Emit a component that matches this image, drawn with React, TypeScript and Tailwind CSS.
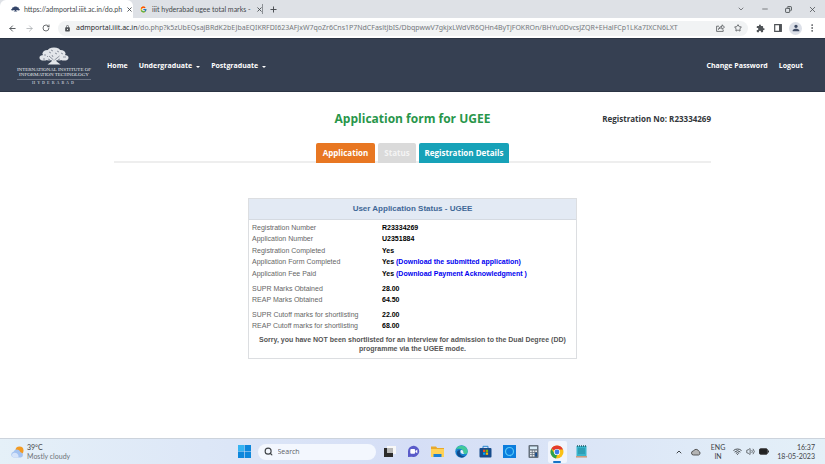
import type { ReactNode } from "react";
import {
  ArrowLeft,
  ArrowRight,
  ChevronDown,
  ChevronUp,
  Copy,
  EllipsisVertical,
  Minus,
  Plus,
  RotateCw,
  Search,
  Star,
  Volume2,
  Wifi,
  X,
} from "lucide-react";
import { MdExtension, MdLock, MdPerson } from "react-icons/md";
import { FcGoogle } from "react-icons/fc";

function Crown({ className }: { className: string }) {
  return (
    <svg viewBox="0 0 30 18" className={className} aria-hidden="true">
      <g fill="currentColor">
        <ellipse cx="15" cy="4" rx="6.5" ry="3.600" />
        <ellipse cx="8.5" cy="6.5" rx="5" ry="3.600" />
        <ellipse cx="21.5" cy="6.5" rx="5" ry="3.600" />
        <ellipse cx="4.800" cy="10.800" rx="4.300" ry="2.800" />
        <ellipse cx="25.200" cy="10.800" rx="4.300" ry="2.800" />
        <ellipse cx="10" cy="11" rx="4" ry="2.500" />
        <ellipse cx="20" cy="11" rx="4" ry="2.500" />
        <ellipse cx="15" cy="9" rx="7" ry="4" />
        <path d="M13 10h4l.6 4.500 4 3H8.500l4-3z" />
      </g>
      <g stroke="#364052" strokeWidth=".7" fill="none" opacity=".7">
        <path d="M14.500 13L10 9M15.500 13l5-4M10 5l2 1M18 4l2 1M5 8h2M22 6l2 1M12 3l2 1M4 12h2M24 10h3M16 6l2 1M9 12l2 .8M19 12.800l2-.8M13 8l1 2M8 9l1 1" />
      </g>
    </svg>
  );
}

function IconButton({ label, children, className = "" }: { label: string; children: ReactNode; className?: string }) {
  return (
    <button type="button" aria-label={label} className={`flex shrink-0 items-center justify-center ${className}`}>
      {children}
    </button>
  );
}

function TabStrip() {
  return (
    <div className="flex h-[18px] items-stretch bg-[#dee1e6] font-[Lato,sans-serif] text-[7px] text-[#45494d]">
      <div className="flex w-[133px] shrink-0 items-center gap-[4px] rounded-t-md bg-white pr-[5px] pl-[11px]">
        <Crown className="h-[6px] w-[9px] shrink-0 text-[#34466b]" />
        <span className="flex-1 whitespace-nowrap">https://admportal.iiit.ac.in/do.ph</span>
        <IconButton label="Close tab">
          <X size={7} strokeWidth={3} />
        </IconButton>
      </div>
      <div className="flex w-[129px] shrink-0 items-center gap-[5px] pr-[6px] pl-[7px]">
        <FcGoogle size={7} className="shrink-0" />
        <span className="flex-1 whitespace-nowrap">iiit hyderabad ugee total marks -</span>
        <IconButton label="Close tab">
          <X size={7} strokeWidth={3} />
        </IconButton>
      </div>
      <div className="my-[4px] w-px bg-[#8d9196]" />
      <IconButton label="New tab" className="w-[20px]">
        <Plus size={9} strokeWidth={2.5} />
      </IconButton>
      <div className="ml-auto flex items-center gap-[16px] pr-[8px]">
        <IconButton label="Search tabs">
          <ChevronDown size={8} />
        </IconButton>
        <IconButton label="Minimize">
          <Minus size={8} />
        </IconButton>
        <IconButton label="Restore">
          <Copy size={7} className="-scale-x-100" strokeWidth={3} />
        </IconButton>
        <IconButton label="Close window">
          <X size={9} />
        </IconButton>
      </div>
    </div>
  );
}

function Toolbar() {
  return (
    <div className="flex h-[20px] items-center bg-white pr-[8px] pl-[7px] text-[#4f5357]">
      <IconButton label="Back" className="w-[10px]">
        <ArrowLeft size={9} strokeWidth={2.5} />
      </IconButton>
      <IconButton label="Forward" className="ml-[7px] w-[10px] text-[#a6a9ad]">
        <ArrowRight size={9} />
      </IconButton>
      <IconButton label="Reload" className="ml-[7px] w-[10px]">
        <RotateCw size={8} strokeWidth={2.5} />
      </IconButton>
      <div className="ml-[7px] flex h-[15px] min-w-0 flex-1 items-center rounded-full bg-[#f1f3f4] px-[6px]">
        <MdLock size={7} className="shrink-0" />
        <div className="ml-[5px] flex-1 font-['Noto_Sans',sans-serif] text-[7px] whitespace-nowrap text-[#74787c]">
          <span className="text-[#2b2d30]">admportal.iiit.ac.in</span>
          /do.php?k5zUbEQsajBRdK2bEJbaEQIKRFDI623AFJxW7qoZr6Cns1P7NdCFasltJbIS/DbqpwwV7gkjxLWdVR6QHn4ByTjFOKROn/BHYu0DvcsJZQR+EHalFCp1LKa7IXCN6LXT
        </div>
        <IconButton label="Share" className="ml-[8px]">
          <svg viewBox="0 0 9 8" className="h-[8px] w-[9px]" fill="none" stroke="currentColor" strokeWidth=".8">
            <path d="M3 2.200H.6v5.200h6.600V5.600" />
            <path d="M2.500 5.500c.3-2 1.500-3 3.500-3V.8l2.500 2.300L6 5.300V3.800c-1.500 0-2.600.4-3.500 1.700z" />
          </svg>
        </IconButton>
        <IconButton label="Bookmark" className="ml-[9px]">
          <Star size={8} strokeWidth={2.5} />
        </IconButton>
      </div>
      <IconButton label="Extensions" className="ml-[8px]">
        <MdExtension size={9} />
      </IconButton>
      <IconButton label="Side panel" className="ml-[9px]">
        <svg viewBox="0 0 8 8" className="size-[8px]">
          <path d="M.7 .7h6.600v6.600H.7z" fill="none" stroke="currentColor" strokeWidth="1.200" />
          <path d="M5 1h2.500v6H5z" fill="currentColor" />
        </svg>
      </IconButton>
      <IconButton label="Profile" className="ml-[7px] size-[13px] rounded-full bg-[#dce0e8] text-[#3d4a63]">
        <MdPerson size={10} />
      </IconButton>
      <IconButton label="Menu" className="ml-[5px]">
        <EllipsisVertical size={10} />
      </IconButton>
    </div>
  );
}

function NavMenu({ children }: { children: ReactNode }) {
  return (
    <button type="button" className="flex items-center gap-[4px] font-bold">
      {children}
      <svg viewBox="0 0 4 2" className="h-[2px] w-[4px]" aria-hidden="true">
        <path d="M0 0h4L2 2z" fill="currentColor" />
      </svg>
    </button>
  );
}

function SiteHeader() {
  return (
    <header className="flex h-[54px] items-center border-y border-[#2b3444] bg-[#364052] pr-[22px] pl-[17px] text-[7px] font-bold text-white">
      <a href="#home" className="flex w-[74px] flex-col items-center pt-[2px] text-[#e3e6ea]">
        <Crown className="h-[18px] w-[30px]" />
        <span className="mt-[2px] font-['Liberation_Serif',serif] text-[5px] leading-[5px] font-normal whitespace-nowrap">
          INTERNATIONAL INSTITUTE OF
        </span>
        <span className="font-['Liberation_Serif',serif] text-[5px] leading-[5px] font-normal whitespace-nowrap">
          INFORMATION TECHNOLOGY
        </span>
        <span className="mt-[2px] w-full border-t border-[#697182] pt-px text-center font-['Liberation_Serif',serif] text-[4px] leading-[4px] tracking-[2px] text-[#b5bac4]">
          HYDERABAD
        </span>
      </a>
      <nav className="ml-[16px] flex flex-1 items-center gap-[11px] pt-[3px]">
        <a href="#home">Home</a>
        <NavMenu>Undergraduate</NavMenu>
        <NavMenu>Postgraduate</NavMenu>
        <a href="#password" className="ml-auto">Change Password</a>
        <a href="#logout">Logout</a>
      </nav>
    </header>
  );
}

type Row = { label: string; value: string; link?: string };

const groups: Row[][] = [
  [
    { label: "Registration Number", value: "R23334269" },
    { label: "Application Number", value: "U2351884" },
    { label: "Registration Completed", value: "Yes" },
    { label: "Application Form Completed", value: "Yes", link: "(Download the submitted application)" },
    { label: "Application Fee Paid", value: "Yes", link: "(Download Payment Acknowledgment )" },
  ],
  [
    { label: "SUPR Marks Obtained", value: "28.00" },
    { label: "REAP Marks Obtained", value: "64.50" },
  ],
  [
    { label: "SUPR Cutoff marks for shortlisting", value: "22.00" },
    { label: "REAP Cutoff marks for shortlisting", value: "68.00" },
  ],
];

function StatusCard() {
  return (
    <section className="mx-auto mt-[35px] w-full max-w-[329px] border border-[#dcdee1] font-['Liberation_Sans',Arial,sans-serif] text-[7px]">
      <h2 className="border-b border-[#d5dae1] bg-[#e3eaf4] text-center text-[8px] leading-[20px] font-bold text-[#3f6797]">
        User Application Status - UGEE
      </h2>
      <div className="flex flex-col gap-[3px] pt-px pl-[3px]">
        {groups.map((rows) => (
          <table key={rows[0].label} className="w-full table-fixed leading-[11px]">
            <tbody>
              {rows.map((row) => (
                <tr key={row.label} className="odd:h-[12px] even:h-[11px]">
                  <th scope="row" className="w-[130px] p-0 text-left font-normal text-[#666]">{row.label}</th>
                  <td className="p-0 font-bold text-black">
                    {row.value}
                    {row.link && (
                      <>
                        {" "}
                        <a href="#download" className="text-[#0000f0]">{row.link}</a>
                      </>
                    )}
                  </td>
                </tr>
              ))}
            </tbody>
          </table>
        ))}
      </div>
      <p className="px-[8px] pt-[4px] pb-[5px] text-center leading-[9px] font-bold text-[#555]">
        Sorry, you have NOT been shortlisted for an interview for admission to the Dual Degree (DD) programme via the UGEE mode.
      </p>
    </section>
  );
}

function Content() {
  return (
    <main className="mx-auto w-full max-w-[597px] flex-1">
      <div className="grid grid-cols-[1fr_auto_1fr] items-center pt-[18px]">
        <h1 className="col-start-2 text-[12px] leading-[18px] font-bold text-[#28964a]">Application form for UGEE</h1>
        <p className="text-right text-[8px] font-bold text-[#33373b]">Registration No: R23334269</p>
      </div>
      <div className="mt-[15px] flex justify-center gap-[3px] border-b-2 border-[#eeeeee] text-[8px] leading-[20px] font-bold text-white">
        <button type="button" className="-mb-[2px] w-[59px] rounded-t-xs bg-[#e87722]">Application</button>
        <button type="button" className="-mb-[2px] w-[38px] rounded-t-xs bg-[#dadada] text-[#f4f4f4]">Status</button>
        <button type="button" className="-mb-[2px] w-[90px] rounded-t-xs bg-[#17a2b8]">Registration Details</button>
      </div>
      <StatusCard />
    </main>
  );
}

function TaskIcons() {
  return (
    <>
      <IconButton label="Task view">
        <svg viewBox="0 0 13 13" className="size-[13px]">
          <path d="M4 1h9v8H4z" fill="#f7f7f7" />
          <path d="M1 3h9v9H1z" fill="#2b2b2b" />
          <path d="M4 3h6v5H4z" fill="#b9b9b9" />
        </svg>
      </IconButton>
      <IconButton label="Chat">
        <svg viewBox="0 0 13 13" className="size-[13px]">
          <path d="M1 6.500V12l4-.3A5.600 5.600 0 1 0 1 6.500z" fill="#5a5bc9" />
          <rect x="3.300" y="4" width="4.800" height="4.800" rx="1" fill="#fff" />
          <path d="M8.400 6l1.900-1.400v3.600L8.400 7z" fill="#fff" />
        </svg>
      </IconButton>
      <IconButton label="File Explorer">
        <svg viewBox="0 0 13 13" className="size-[13px]">
          <path d="M0 1.500h5l1.200 1.500H13v3H0z" fill="#e8a92c" />
          <path d="M0 4h13v8H0z" fill="#ffd257" />
          <path d="M2.500 9h8v3h-8z" fill="#1b7fd6" />
        </svg>
      </IconButton>
      <IconButton label="Edge">
        <svg viewBox="0 0 13 13" className="size-[13px]">
          <circle cx="6.500" cy="6.500" r="6.200" fill="#1680cf" />
          <path d="M.6 5A6.200 6.200 0 0 1 12.700 6.500c0 2-1.700 2.900-3.400 2.600-1.500-.3-1-1.500-1-2.500C8 4 3.500 2.500.6 5z" fill="#42c99b" />
          <path d="M5.500 5.500c-2 2.500 0 6 4.500 6-4 2.500-9-.5-8-4.500.4-1.500 2-2 3.500-1.500z" fill="#114a8b" />
          <path d="M5.700 5.200c1.300-.6 2.800.2 2.600 1.800 0 1 .3 1.700 1.300 2-2.500.6-5-1.300-3.900-3.800z" fill="#e6eefb" />
        </svg>
      </IconButton>
      <IconButton label="Microsoft Store">
        <svg viewBox="0 0 13 13" className="size-[13px]">
          <path d="M4 3.500V1.300h5v2.200" fill="none" stroke="#2887cf" />
          <rect x=".5" y="3" width="12" height="9.500" rx="1" fill="#164c8c" />
          <path d="M4 4.700h2.300V7H4z" fill="#f25022" />
          <path d="M6.800 4.700h2.300V7H6.800z" fill="#7fba00" />
          <path d="M4 7.500h2.300v2.300H4z" fill="#00a4ef" />
          <path d="M6.800 7.500h2.300v2.300H6.800z" fill="#ffb900" />
        </svg>
      </IconButton>
      <IconButton label="Alexa">
        <svg viewBox="0 0 13 13" className="size-[13px]">
          <path d="M0 0h13v13H0z" fill="#0b7ddd" />
          <circle cx="6.500" cy="6.500" r="4" fill="none" stroke="#57c8f7" strokeWidth="1.200" />
          <path d="M5.500 10.500l2-1 .5 2z" fill="#57c8f7" />
        </svg>
      </IconButton>
      <IconButton label="Calculator">
        <svg viewBox="0 0 13 13" className="size-[13px]">
          <rect x="1.500" width="10" height="13" rx="1" fill="#66717d" />
          <path d="M3 1.500h7v2.700H3z" fill="#d7ecf8" />
          <path d="M3 5.500h1.800v1.500H3zM5.600 5.500h1.800v1.500H5.600zM8.200 5.500H10v1.500H8.200zM3 7.800h1.800v1.500H3zM5.600 7.800h1.800v1.500H5.600zM3 10h1.800v1.500H3zM5.600 10h1.800v1.500H5.600z" fill="#e7ebef" />
          <path d="M8.200 7.800H10v3.700H8.200z" fill="#174e91" />
        </svg>
      </IconButton>
      <span className="-mx-[3px] flex h-[22px] w-[19px] flex-col items-center justify-end rounded-xs bg-[#f1f5fd]">
        <IconButton label="Chrome">
          <svg viewBox="0 0 14 14" className="size-[14px]">
            <circle cx="7" cy="7" r="6.500" fill="#fbc116" />
            <path d="M7 7L1.370 3.750A6.500 6.500 0 0 1 12.630 3.750L13 4.500H7z" fill="#e33b2e" />
            <path d="M1.370 3.750L4.400 8.500 7 10l-1 3.400A6.500 6.500 0 0 1 1.370 3.750z" fill="#2da04e" />
            <circle cx="7" cy="7" r="3.100" fill="#fff" />
            <circle cx="7" cy="7" r="2.400" fill="#3b7de9" />
          </svg>
        </IconButton>
        <span className="mt-[2px] h-[2px] w-[8px] rounded-full bg-[#1673c6]" />
      </span>
      <IconButton label="Notepad">
        <svg viewBox="0 0 13 13" className="size-[13px]">
          <path d="M1.500 1h10v10h-10z" fill="#39b5cc" />
          <path d="M2.500 0v2M4.500 0v2M6.500 0v2M8.500 0v2M10.500 0v2" stroke="#28606c" strokeWidth=".8" />
          <path d="M3 4h7M3 6h7M3 8h7" stroke="#207f96" strokeWidth=".8" />
          <path d="M1 11h11v1.600H1z" fill="#c99d82" />
        </svg>
      </IconButton>
    </>
  );
}

function Taskbar() {
  return (
    <footer className="grid h-[26px] grid-cols-[1fr_auto_1fr] items-center border-t border-[#ccd3dc] bg-linear-to-r from-[#e5f0f8] via-[#d5def6] to-[#e4f0f8] font-[Lato,sans-serif] text-[7px] leading-[9px] text-[#3f4347]">
      <div className="flex items-center gap-[3px] pl-[10px]">
        <svg viewBox="0 0 14 12" className="h-[12px] w-[14px]" aria-hidden="true">
          <circle cx="9.500" cy="4.500" r="4" fill="#f39a20" />
          <path d="M3.500 11.500a3 3 0 0 1 0-5.800 3.800 3.800 0 0 1 7 .5 2.700 2.700 0 0 1 .5 5.300z" fill="#a3c2f0" />
          <path d="M3.500 11.500a2.500 2.500 0 0 1 .8-4.800 4 4 0 0 1 4.200 4.800z" fill="#d6e4fa" />
        </svg>
        <div>
          <p>39°C</p>
          <p className="text-[#6d7277]">Mostly cloudy</p>
        </div>
      </div>
      <div className="flex items-center gap-[11px]">
        <IconButton label="Start">
          <svg viewBox="0 0 13 13" className="size-[13px]">
            <path d="M0 0h6.200v6.200H0zM6.800 0H13v6.200H6.800zM0 6.800h6.200V13H0zM6.800 6.800H13V13H6.800z" fill="#0d87dc" />
            <path d="M0 0h6.200v6.200H0z" fill="#35b4f2" />
          </svg>
        </IconButton>
        <label className="-mx-[4px] flex h-[16px] w-[118px] items-center gap-[5px] rounded-full bg-[#f3f7fe] pl-[6px]">
          <Search size={9} strokeWidth={3} className="shrink-0" aria-hidden="true" />
          <input
            type="text"
            aria-label="Search"
            placeholder="Search"
            className="w-full min-w-0 bg-transparent font-['Open_Sans',sans-serif] text-[7px] outline-none placeholder:text-[#5c6066]"
          />
        </label>
        <TaskIcons />
      </div>
      <div className="flex items-center justify-end pr-[10px]">
        <ChevronUp size={8} strokeWidth={3} />
        <svg viewBox="0 0 10 8" className="ml-[8px] h-[8px] w-[10px]" aria-hidden="true">
          <path d="M2.500 7a2 2 0 0 1 0-4 2.800 2.800 0 0 1 5.200.2A2 2 0 0 1 7.600 7z" fill="#b4b4b4" stroke="#4a4a4a" strokeWidth=".9" />
        </svg>
        <p className="ml-[10px] text-center">
          ENG
          <br />
          IN
        </p>
        <Wifi size={9} strokeWidth={2.5} className="ml-[8px]" />
        <Volume2 size={9} className="ml-[4px]" />
        <svg viewBox="0 0 10 7" className="ml-[4px] h-[7px] w-[10px]" aria-hidden="true">
          <rect x=".5" y=".8" width="7.800" height="5.400" rx="1" fill="#222" stroke="#333" />
          <path d="M9 2.500h1v2H9z" fill="#333" />
        </svg>
        <p className="ml-[8px] text-right">
          16:37
          <br />
          18-05-2023
        </p>
      </div>
    </footer>
  );
}

export default function App() {
  return (
    <div className="flex min-h-screen flex-col bg-white font-['Open_Sans','Noto_Sans',sans-serif]">
      <TabStrip />
      <Toolbar />
      <SiteHeader />
      <Content />
      <Taskbar />
    </div>
  );
}
